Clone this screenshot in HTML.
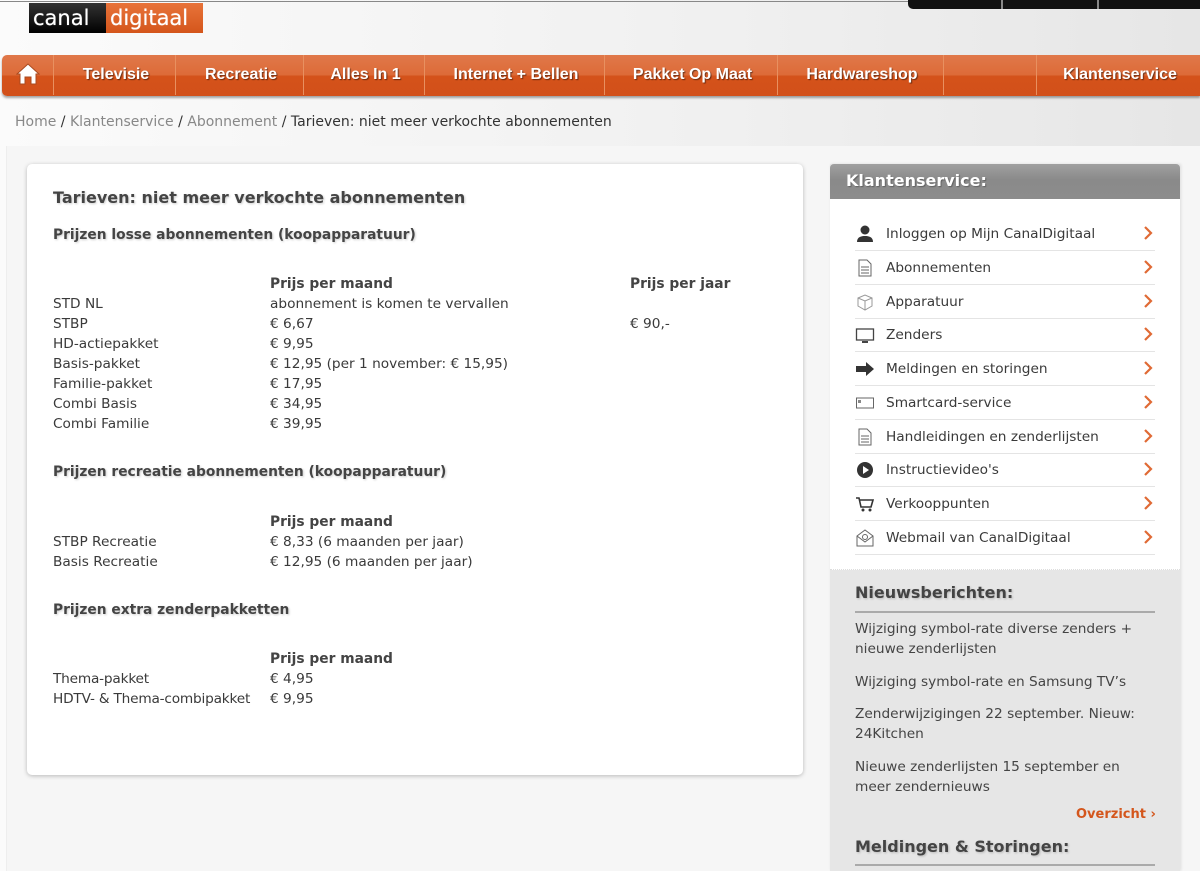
<!DOCTYPE html>
<html><head><meta charset="utf-8"><style>
*{margin:0;padding:0;box-sizing:border-box}
body{width:1200px;height:871px;overflow:hidden;position:relative;font-family:"DejaVu Sans","Liberation Sans",sans-serif;background:linear-gradient(90deg,#fbfbfb,#f0f0f0 60%,#e6e6e6);color:#444}
.a{position:absolute;white-space:nowrap}
.t{font-size:13.7px;line-height:20px;color:#3a3a3a}
.b{font-weight:bold;color:#444;text-shadow:1px 1px 2px rgba(0,0,0,.2)}
.nav{position:absolute;left:2px;top:55px;width:1198px;height:41px;background:linear-gradient(#e0784a 0%,#dd6b38 48%,#d4521a 52%,#d2501a 100%);border-radius:5px 0 0 5px;box-shadow:0 2px 2px rgba(0,0,0,.35)}
.nav span{position:absolute;top:0;line-height:40px;color:#fff;font-family:"Liberation Sans",sans-serif;font-weight:bold;font-size:16px;text-shadow:1px 1px 1px rgba(0,0,0,.5);text-align:center}
.dv{position:absolute;top:0;width:1px;height:40px;background:#b8501e;border-right:1px solid #e89060}
.si{position:absolute;left:886px;font-size:13.7px;color:#3a3a3a;line-height:20px}
.ln{position:absolute;left:855px;width:300px;height:1px;background:#e4e4e4}
.ar{position:absolute;left:1143px;width:10px;height:16px}
.ic{position:absolute;left:855px;width:20px;height:20px}
.nw{position:absolute;left:855px;font-size:13.7px;line-height:20px;color:#444}
.lg{position:absolute;top:3px;line-height:30px;font-size:21px;color:#fff;font-family:'DejaVu Sans',sans-serif;text-shadow:0 0 .6px #fff}
</style></head><body>
<div class="a" style="left:0;top:1px;width:1200px;height:1px;background:#888"></div>
<div class="a" style="left:29px;top:3px;width:77px;height:30px;background:linear-gradient(#333,#000)"></div>
<div class="a" style="left:106px;top:3px;width:97px;height:30px;background:linear-gradient(#e8733a,#d4561c)"></div>
<div class="lg" style="left:33px">canal</div>
<div class="lg" style="left:110px">digitaal</div>
<div class="a" style="left:908px;top:0;width:292px;height:9px;background:#111;border-radius:0 0 0 5px"></div>
<div class="a" style="left:1001px;top:0;width:2px;height:9px;background:#888"></div>
<div class="a" style="left:1097px;top:0;width:2px;height:9px;background:#888"></div>
<div class="nav">
<svg style="position:absolute;left:14px;top:8px" width="24" height="22" viewBox="0 0 24 22"><path d="M12 1L1 11h3v10h5v-7h6v7h5V11h3z" fill="#fff" stroke="#a84a20" stroke-width="1"/></svg>
<div class="dv" style="left:51px"></div><span style="left:53px;width:122px">Televisie</span>
<div class="dv" style="left:173px"></div><span style="left:175px;width:128px">Recreatie</span>
<div class="dv" style="left:301px"></div><span style="left:303px;width:121px">Alles In 1</span>
<div class="dv" style="left:422px"></div><span style="left:424px;width:180px">Internet + Bellen</span>
<div class="dv" style="left:602px"></div><span style="left:604px;width:173px">Pakket Op Maat</span>
<div class="dv" style="left:775px"></div><span style="left:777px;width:166px">Hardwareshop</span>
<div class="dv" style="left:941px"></div>
<div class="dv" style="left:1034px"></div><span style="left:1036px;width:164px">Klantenservice</span>
</div>
<div class="a" style="left:15px;top:112px;line-height:20px;font-size:14px;color:#333"><span style="color:#888">Home</span> / <span style="color:#888">Klantenservice</span> / <span style="color:#888">Abonnement</span> / Tarieven: niet meer verkochte abonnementen</div>
<div class="a" style="left:6px;top:146px;width:1194px;height:725px;background:#f6f6f6;border-left:1px solid #eee"></div>
<div class="a" style="left:27px;top:164px;width:776px;height:611px;background:#fff;border-radius:5px;box-shadow:0 1px 4px rgba(0,0,0,.25)"></div>
<div class="a b" style="left:53px;top:186px;font-size:16px;line-height:24px">Tarieven: niet meer verkochte abonnementen</div>
<div class="a b" style="left:53px;top:225px;font-size:13.8px;line-height:20px">Prijzen losse abonnementen (koopapparatuur)</div>
<div class="a t" style="left:270px;top:274px;font-weight:bold;font-size:13.8px;color:#444">Prijs per maand</div>
<div class="a t" style="left:630px;top:274px;font-weight:bold;font-size:13.8px;color:#444">Prijs per jaar</div>
<div class="a t" style="left:53px;top:294px">STD NL<br>STBP<br>HD-actiepakket<br>Basis-pakket<br>Familie-pakket<br>Combi Basis<br>Combi Familie</div>
<div class="a t" style="left:270px;top:294px">abonnement is komen te vervallen<br>€ 6,67<br>€ 9,95<br>€ 12,95 (per 1 november: € 15,95)<br>€ 17,95<br>€ 34,95<br>€ 39,95</div>
<div class="a t" style="left:630px;top:314px">€ 90,-</div>
<div class="a b" style="left:53px;top:462px;font-size:13.8px;line-height:20px">Prijzen recreatie abonnementen (koopapparatuur)</div>
<div class="a t" style="left:270px;top:512px;font-weight:bold;font-size:13.8px;color:#444">Prijs per maand</div>
<div class="a t" style="left:53px;top:532px">STBP Recreatie<br>Basis Recreatie</div>
<div class="a t" style="left:270px;top:532px">€ 8,33 (6 maanden per jaar)<br>€ 12,95 (6 maanden per jaar)</div>
<div class="a b" style="left:53px;top:600px;font-size:13.8px;line-height:20px">Prijzen extra zenderpakketten</div>
<div class="a t" style="left:270px;top:649px;font-weight:bold;font-size:13.8px;color:#444">Prijs per maand</div>
<div class="a t" style="left:53px;top:669px;letter-spacing:-.2px">Thema-pakket<br>HDTV- &amp; Thema-combipakket</div>
<div class="a t" style="left:270px;top:669px">€ 4,95<br>€ 9,95</div>

<div class="a" style="left:830px;top:164px;width:350px;height:707px;background:#e6e6e6;box-shadow:1px 0 3px rgba(0,0,0,.1)"></div>
<div class="a" style="left:830px;top:164px;width:350px;height:35px;background:linear-gradient(#a0a0a0,#8a8a8a 45%,#8c8c8c);border-radius:4px 4px 0 0"></div>
<div class="a" style="left:846px;top:169px;line-height:24px;font-size:16px;font-weight:bold;color:#fff;text-shadow:1px 1px 1px rgba(0,0,0,.3)">Klantenservice:</div>
<div class="a" style="left:830px;top:199px;width:350px;height:371px;background:#fff;border-bottom:1px dotted #ddd"></div>

<svg class="ic" style="top:224px" viewBox="0 0 20 20"><circle cx="10" cy="6" r="4.5" fill="#333"/><path d="M2 18c0-5 4-6 8-6s8 1 8 6z" fill="#333"/></svg>
<div class="si" style="top:224px">Inloggen op Mijn CanalDigitaal</div><svg class="ar" style="top:225px" viewBox="0 0 10 16"><path d="M2 2l6 6-6 6" fill="none" stroke="#e06a35" stroke-width="2.2"/></svg><div class="ln" style="top:250px"></div>
<svg class="ic" style="top:258px" viewBox="0 0 20 20"><path d="M4 2h8l4 4v12H4z" fill="#fff" stroke="#666"/><path d="M6 9h8M6 12h8M6 15h8" stroke="#666"/></svg>
<div class="si" style="top:258px">Abonnementen</div><svg class="ar" style="top:259px" viewBox="0 0 10 16"><path d="M2 2l6 6-6 6" fill="none" stroke="#e06a35" stroke-width="2.2"/></svg><div class="ln" style="top:284px"></div>
<svg class="ic" style="top:292px" viewBox="0 0 20 20"><path d="M3 6l7-3 7 3v8l-7 4-7-4z M3 6l7 3 7-3M10 9v9" fill="none" stroke="#999"/></svg>
<div class="si" style="top:292px">Apparatuur</div><svg class="ar" style="top:293px" viewBox="0 0 10 16"><path d="M2 2l6 6-6 6" fill="none" stroke="#e06a35" stroke-width="2.2"/></svg><div class="ln" style="top:318px"></div>
<svg class="ic" style="top:325px" viewBox="0 0 20 20"><rect x="1.5" y="4" width="17" height="11" fill="none" stroke="#444" stroke-width="1.3"/><path d="M7 17h6" stroke="#444" stroke-width="2"/></svg>
<div class="si" style="top:325px">Zenders</div><svg class="ar" style="top:326px" viewBox="0 0 10 16"><path d="M2 2l6 6-6 6" fill="none" stroke="#e06a35" stroke-width="2.2"/></svg><div class="ln" style="top:351px"></div>
<svg class="ic" style="top:359px" viewBox="0 0 20 20"><path d="M1 7h10V3l8 7-8 7v-4H1z" fill="#333"/></svg>
<div class="si" style="top:359px">Meldingen en storingen</div><svg class="ar" style="top:360px" viewBox="0 0 10 16"><path d="M2 2l6 6-6 6" fill="none" stroke="#e06a35" stroke-width="2.2"/></svg><div class="ln" style="top:385px"></div>
<svg class="ic" style="top:393px" viewBox="0 0 20 20"><rect x="1.5" y="5" width="17" height="10" fill="none" stroke="#666"/><rect x="3" y="7" width="3" height="3" fill="#888"/></svg>
<div class="si" style="top:393px">Smartcard-service</div><svg class="ar" style="top:394px" viewBox="0 0 10 16"><path d="M2 2l6 6-6 6" fill="none" stroke="#e06a35" stroke-width="2.2"/></svg><div class="ln" style="top:419px"></div>
<svg class="ic" style="top:427px" viewBox="0 0 20 20"><path d="M4 2h8l4 4v12H4z" fill="#fff" stroke="#666"/><path d="M6 9h8M6 12h8M6 15h8" stroke="#666"/></svg>
<div class="si" style="top:427px">Handleidingen en zenderlijsten</div><svg class="ar" style="top:428px" viewBox="0 0 10 16"><path d="M2 2l6 6-6 6" fill="none" stroke="#e06a35" stroke-width="2.2"/></svg><div class="ln" style="top:453px"></div>
<svg class="ic" style="top:460px" viewBox="0 0 20 20"><circle cx="10" cy="10" r="8" fill="#333"/><path d="M8 6l6 4-6 4z" fill="#fff"/></svg>
<div class="si" style="top:460px">Instructievideo's</div><svg class="ar" style="top:461px" viewBox="0 0 10 16"><path d="M2 2l6 6-6 6" fill="none" stroke="#e06a35" stroke-width="2.2"/></svg><div class="ln" style="top:486px"></div>
<svg class="ic" style="top:494px" viewBox="0 0 20 20"><path d="M1 4h3l2 9h10l2-7H5" fill="none" stroke="#333" stroke-width="1.6"/><circle cx="8" cy="16" r="1.5" fill="#333"/><circle cx="15" cy="16" r="1.5" fill="#333"/></svg>
<div class="si" style="top:494px">Verkooppunten</div><svg class="ar" style="top:495px" viewBox="0 0 10 16"><path d="M2 2l6 6-6 6" fill="none" stroke="#e06a35" stroke-width="2.2"/></svg><div class="ln" style="top:520px"></div>
<svg class="ic" style="top:528px" viewBox="0 0 20 20"><path d="M2 8l8-6 8 6v10H2z M2 8l8 6 8-6" fill="none" stroke="#666"/><circle cx="10" cy="9" r="2.5" fill="none" stroke="#666"/></svg>
<div class="si" style="top:528px">Webmail van CanalDigitaal</div><svg class="ar" style="top:529px" viewBox="0 0 10 16"><path d="M2 2l6 6-6 6" fill="none" stroke="#e06a35" stroke-width="2.2"/></svg><div class="ln" style="top:554px"></div>

<div class="a b" style="left:855px;top:582px;font-size:16px;line-height:22px">Nieuwsberichten:</div>
<div class="a" style="left:855px;top:611px;width:300px;height:2px;background:#aaa"></div>
<div class="nw" style="top:619px">Wijziging symbol-rate diverse zenders +<br>nieuwe zenderlijsten</div>
<div class="nw" style="top:672px">Wijziging symbol-rate en Samsung TV’s</div>
<div class="nw" style="top:704px">Zenderwijzigingen 22 september. Nieuw:<br>24Kitchen</div>
<div class="nw" style="top:757px">Nieuwe zenderlijsten 15 september en<br>meer zendernieuws</div>
<div class="a" style="left:1076px;top:805px;line-height:20px;font-size:13px;font-weight:bold;color:#d4561c">Overzicht ›</div>
<div class="a b" style="left:855px;top:836px;font-size:16px;line-height:22px">Meldingen &amp; Storingen:</div>
<div class="a" style="left:855px;top:864px;width:300px;height:2px;background:#aaa"></div>
</body></html>
